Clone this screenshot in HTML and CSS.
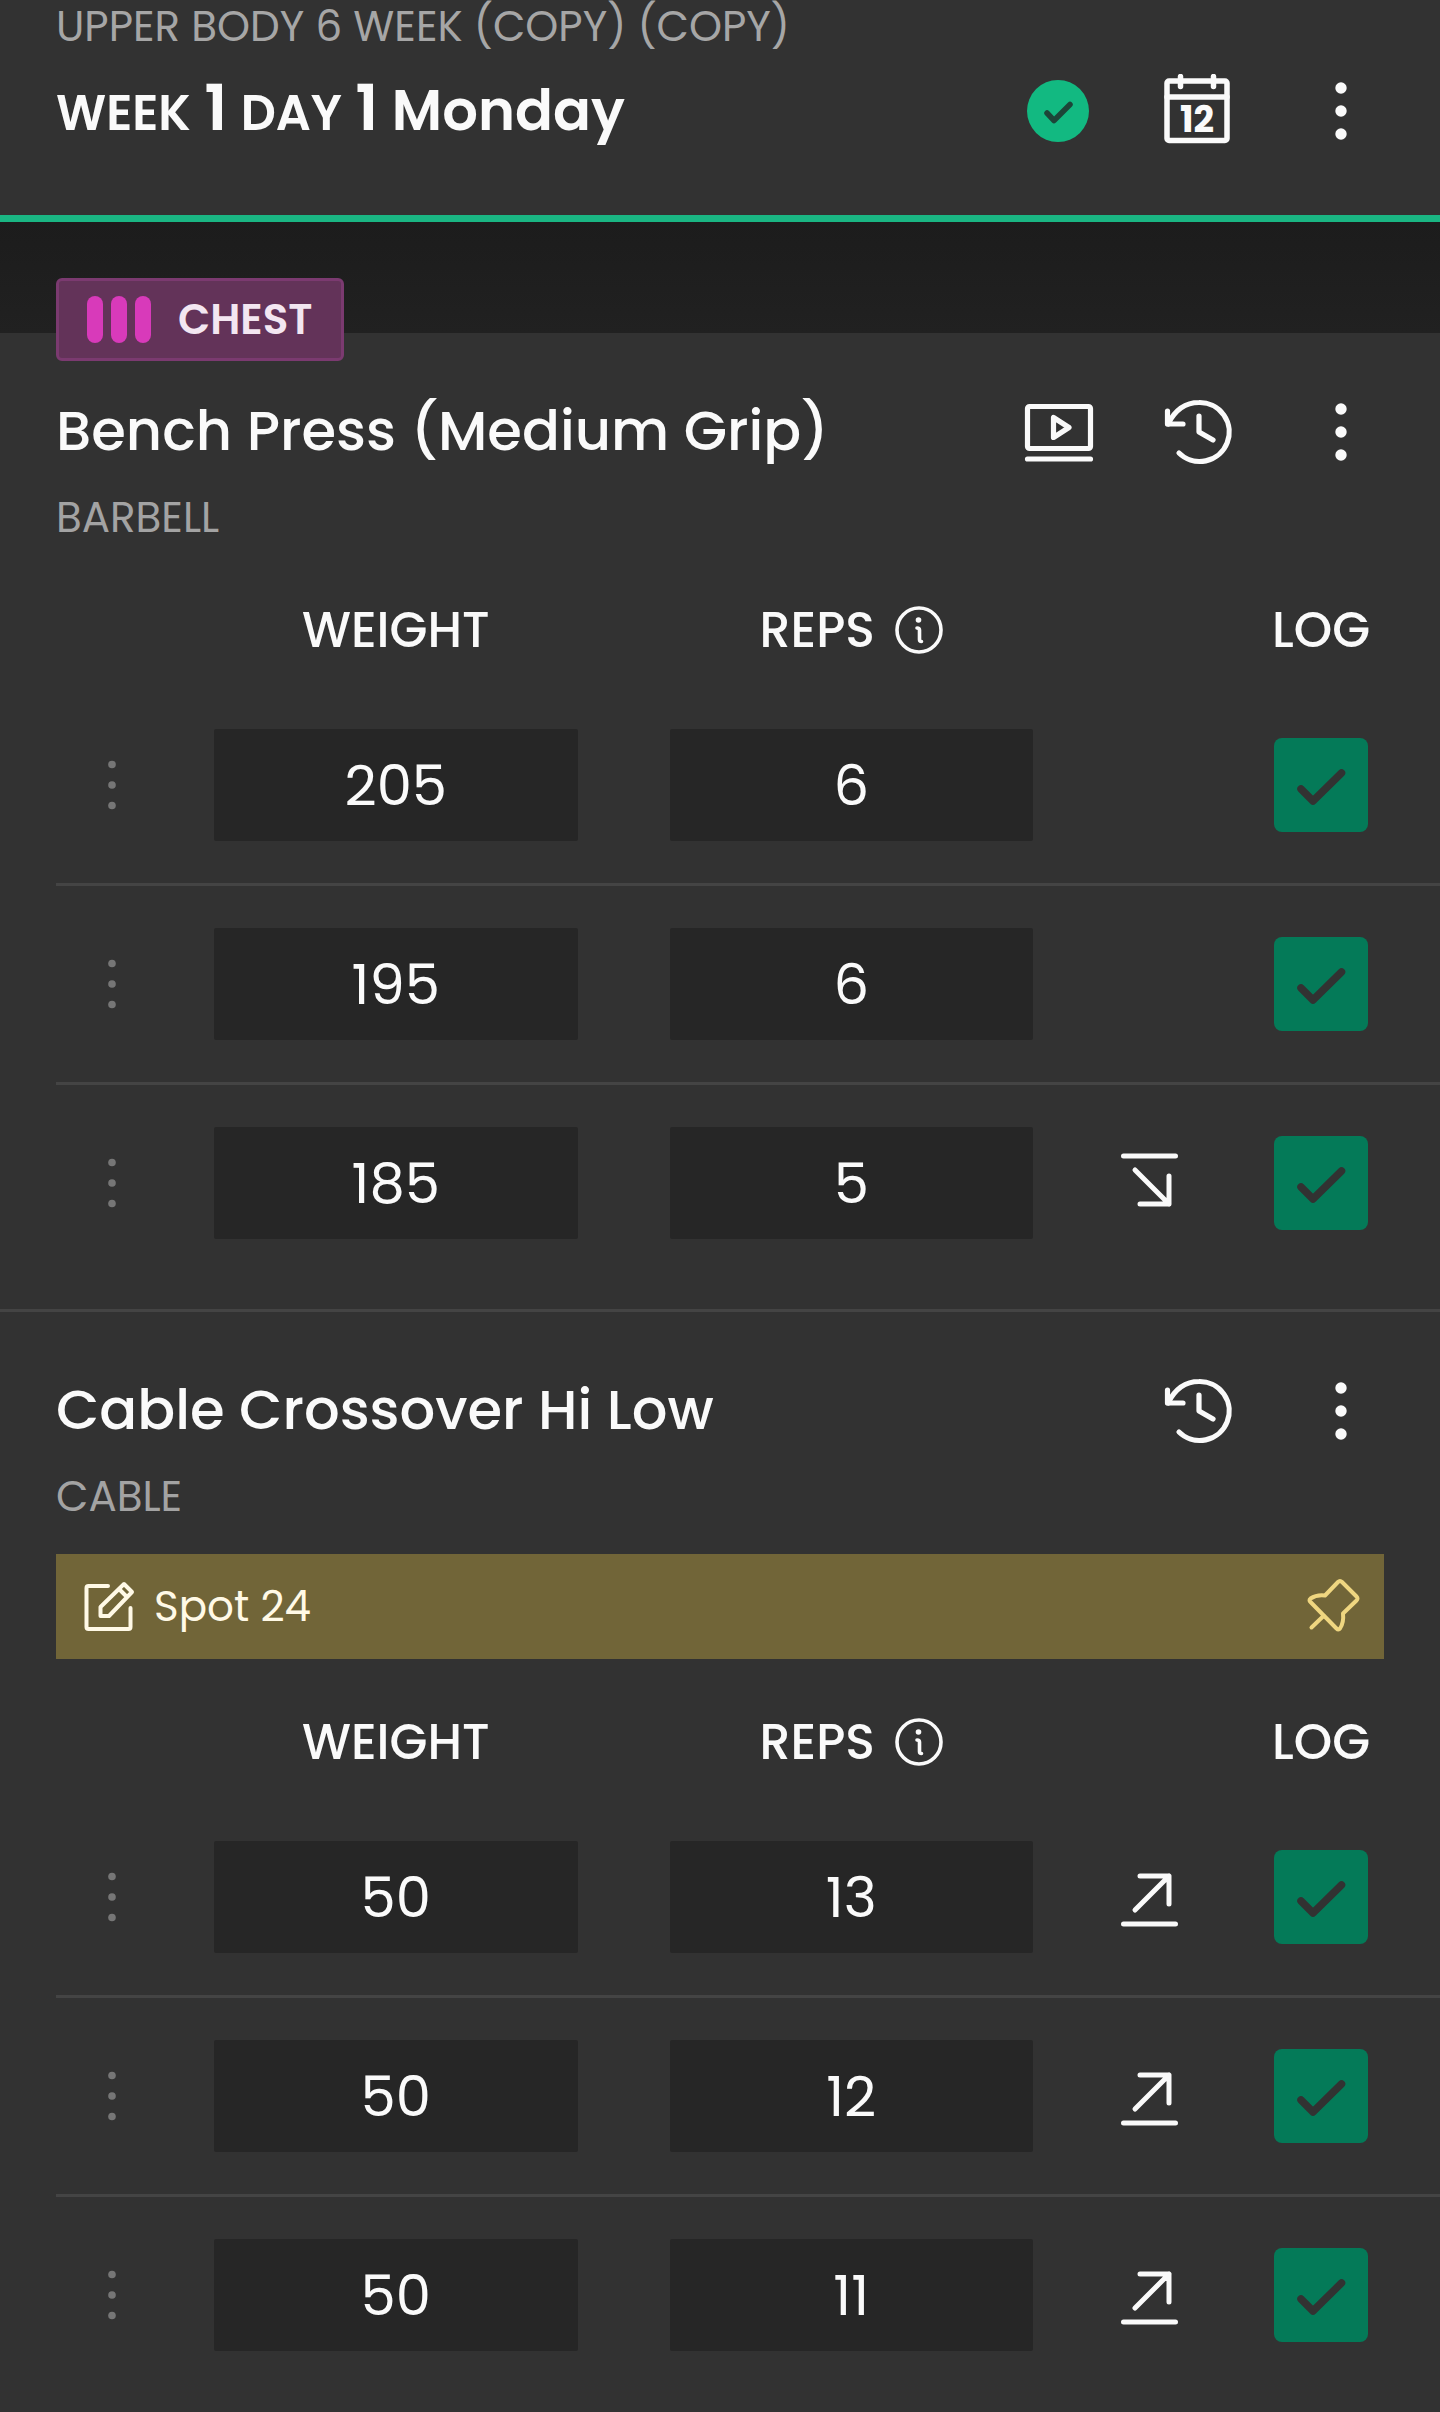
FILE: index.html
```html
<!DOCTYPE html>
<html lang="en">
<head>
    <meta charset="UTF-8">
    <meta name="viewport" content="width=device-width, initial-scale=1">
    <title>Week 1 Day 1 Monday</title>
    <link rel="stylesheet" href="styles.css">
</head>
<body>
    <!-- Icon set -->
    <svg class="icon-defs" aria-hidden="true">
        <symbol id="icon-done" viewBox="0 0 72 72">
            <circle cx="36" cy="37" r="31" fill="#12b981"/>
            <path d="M25 39l7 7.500 16-16" fill="none" stroke="#1d4538" stroke-width="5.500" stroke-linecap="round" stroke-linejoin="round"/>
        </symbol>
        <symbol id="icon-more" viewBox="0 0 72 72">
            <g fill="currentColor"><circle cx="37" cy="14" r="5.700"/><circle cx="37" cy="37" r="5.700"/><circle cx="37" cy="60" r="5.700"/></g>
        </symbol>
        <symbol id="icon-video" viewBox="0 0 72 72">
            <g fill="none" stroke="currentColor" stroke-width="5.200" stroke-linecap="round" stroke-linejoin="round">
                <rect x="5.500" y="11.500" width="63" height="42" rx="2"/>
                <path d="M5.500 64h63M31.500 22.500v20l15.500-10z"/>
            </g>
        </symbol>
        <symbol id="icon-history" viewBox="0 0 72 72">
            <g fill="none" stroke="currentColor" stroke-width="5.200" stroke-linecap="round" stroke-linejoin="round">
                <path d="M5 29C12 15 22 7.500 36 7.500A29.500 29.500 0 1 1 16 58"/>
                <path d="M4.500 16v13H20M36 21v16l14 8"/>
            </g>
        </symbol>
        <symbol id="icon-info" viewBox="0 0 48 48">
            <circle cx="24" cy="24" r="22" fill="none" stroke="currentColor" stroke-width="3.600"/>
            <circle cx="23.500" cy="14" r="2.800" fill="currentColor"/>
            <path d="M22 22q2.500 0 2.500 2v9.500q0 2 2 2" fill="none" stroke="currentColor" stroke-width="3.600" stroke-linecap="round"/>
        </symbol>
        <symbol id="icon-grip" viewBox="0 0 72 72">
            <g fill="currentColor"><circle cx="36" cy="15.500" r="3.800"/><circle cx="36" cy="36" r="3.800"/><circle cx="36" cy="56.500" r="3.800"/></g>
        </symbol>
        <symbol id="icon-down" viewBox="0 0 72 72">
            <path d="M10.500 9h52M22 23l34 34M56 29v28H27" fill="none" stroke="currentColor" stroke-width="5" stroke-linecap="round" stroke-linejoin="round"/>
        </symbol>
        <symbol id="icon-up" viewBox="0 0 72 72">
            <path d="M10.500 63h52M22 49l34-34M27 15h29v28" fill="none" stroke="currentColor" stroke-width="5" stroke-linecap="round" stroke-linejoin="round"/>
        </symbol>
    </svg>

    <header class="top-bar">
        <p class="plan-name">UPPER BODY 6 WEEK (COPY) (COPY)</p>
        <div class="title-row">
            <h1 class="day-title"><span class="label">WEEK</span> <span class="num">1</span> <span class="label">DAY</span> <span class="num">1</span> Monday</h1>
            <div class="actions">
                <button type="button" class="icon-btn" aria-label="Workout complete"><svg><use href="#icon-done"/></svg></button>
                <button type="button" class="icon-btn" aria-label="Calendar">
                    <svg viewBox="0 0 72 72">
                        <g fill="none" stroke="currentColor" stroke-width="5.500" stroke-linecap="round" stroke-linejoin="round">
                            <rect x="4" y="7" width="60" height="59.500" rx="2"/>
                            <path d="M4 23h60M17.500 2.500v10M50.500 2.500v10"/>
                        </g>
                        <text class="cal-day" x="34" y="58" text-anchor="middle" fill="currentColor">12</text>
                    </svg>
                </button>
                <button type="button" class="icon-btn" aria-label="More options"><svg><use href="#icon-more"/></svg></button>
            </div>
        </div>
    </header>

    <main>
        <div class="band"></div>

        <section class="exercise">
            <div class="muscle-badge">
                <span class="bars"><i></i><i></i><i></i></span>
                CHEST
            </div>
            <div class="title-row">
                <h2 class="exercise-name">Bench Press (Medium Grip)</h2>
                <div class="actions">
                    <button type="button" class="icon-btn" aria-label="Video"><svg><use href="#icon-video"/></svg></button>
                    <button type="button" class="icon-btn" aria-label="History"><svg><use href="#icon-history"/></svg></button>
                    <button type="button" class="icon-btn" aria-label="More options"><svg><use href="#icon-more"/></svg></button>
                </div>
            </div>
            <p class="equipment">BARBELL</p>

            <table class="sets">
                <thead>
                    <tr>
                        <th class="col-menu"></th>
                        <th>WEIGHT</th>
                        <th><span class="reps-head">REPS <button type="button" class="info-btn" aria-label="About reps"><svg><use href="#icon-info"/></svg></button></span></th>
                        <th class="col-trend"></th>
                        <th class="col-log">LOG</th>
                    </tr>
                </thead>
                <tbody>
                    <tr>
                        <td><button type="button" class="grip" aria-label="Set 1 options"><svg><use href="#icon-grip"/></svg></button></td>
                        <td class="cell"><input type="text" class="value" aria-label="Weight" value="205"></td>
                        <td class="cell"><input type="text" class="value" aria-label="Reps" value="6"></td>
                        <td></td>
                        <td class="col-log"><input type="checkbox" class="log" aria-label="Log set 1" checked></td>
                    </tr>
                    <tr>
                        <td><button type="button" class="grip" aria-label="Set 2 options"><svg><use href="#icon-grip"/></svg></button></td>
                        <td class="cell"><input type="text" class="value" aria-label="Weight" value="195"></td>
                        <td class="cell"><input type="text" class="value" aria-label="Reps" value="6"></td>
                        <td></td>
                        <td class="col-log"><input type="checkbox" class="log" aria-label="Log set 2" checked></td>
                    </tr>
                    <tr>
                        <td><button type="button" class="grip" aria-label="Set 3 options"><svg><use href="#icon-grip"/></svg></button></td>
                        <td class="cell"><input type="text" class="value" aria-label="Weight" value="185"></td>
                        <td class="cell"><input type="text" class="value" aria-label="Reps" value="5"></td>
                        <td><svg class="trend"><use href="#icon-down"/></svg></td>
                        <td class="col-log"><input type="checkbox" class="log" aria-label="Log set 3" checked></td>
                    </tr>
                </tbody>
            </table>
        </section>

        <section class="exercise next">
            <div class="title-row">
                <h2 class="exercise-name">Cable Crossover Hi Low</h2>
                <div class="actions">
                    <button type="button" class="icon-btn" aria-label="History"><svg><use href="#icon-history"/></svg></button>
                    <button type="button" class="icon-btn" aria-label="More options"><svg><use href="#icon-more"/></svg></button>
                </div>
            </div>
            <p class="equipment">CABLE</p>
            <div class="note">
                <svg class="note-edit" viewBox="0 0 52 52" aria-hidden="true">
                    <g fill="none" stroke="currentColor" stroke-width="4" stroke-linecap="round" stroke-linejoin="round">
                        <path d="M25 5H5.500q-2 0-2 2v39q0 2 2 2h40q2 0 2-2V27"/>
                        <path d="M17.500 35v-9L41 3l8 8-23 24zM36 8l8 8"/>
                    </g>
                </svg>
                <span class="note-text">Spot 24</span>
                <svg class="note-pin" viewBox="0 0 64 62" aria-hidden="true">
                    <path d="M25 19.500L38 6q2-2 4 0l14.500 14.500q2 2 0 4L43 37.500q1 9-3 15-1.500 2-3.500 0L10.500 26q-2-2 0-3.500 6-4 14.500-3zM24 39.500L11.500 51.500" fill="none" stroke="currentColor" stroke-width="4" stroke-linecap="round" stroke-linejoin="round"/>
                </svg>
            </div>

            <table class="sets">
                <thead>
                    <tr>
                        <th class="col-menu"></th>
                        <th>WEIGHT</th>
                        <th><span class="reps-head">REPS <button type="button" class="info-btn" aria-label="About reps"><svg><use href="#icon-info"/></svg></button></span></th>
                        <th class="col-trend"></th>
                        <th class="col-log">LOG</th>
                    </tr>
                </thead>
                <tbody>
                    <tr>
                        <td><button type="button" class="grip" aria-label="Set 1 options"><svg><use href="#icon-grip"/></svg></button></td>
                        <td class="cell"><input type="text" class="value" aria-label="Weight" value="50"></td>
                        <td class="cell"><input type="text" class="value" aria-label="Reps" value="13"></td>
                        <td><svg class="trend"><use href="#icon-up"/></svg></td>
                        <td class="col-log"><input type="checkbox" class="log" aria-label="Log set 1" checked></td>
                    </tr>
                    <tr>
                        <td><button type="button" class="grip" aria-label="Set 2 options"><svg><use href="#icon-grip"/></svg></button></td>
                        <td class="cell"><input type="text" class="value" aria-label="Weight" value="50"></td>
                        <td class="cell"><input type="text" class="value" aria-label="Reps" value="12"></td>
                        <td><svg class="trend"><use href="#icon-up"/></svg></td>
                        <td class="col-log"><input type="checkbox" class="log" aria-label="Log set 2" checked></td>
                    </tr>
                    <tr>
                        <td><button type="button" class="grip" aria-label="Set 3 options"><svg><use href="#icon-grip"/></svg></button></td>
                        <td class="cell"><input type="text" class="value" aria-label="Weight" value="50"></td>
                        <td class="cell"><input type="text" class="value" aria-label="Reps" value="11"></td>
                        <td><svg class="trend"><use href="#icon-up"/></svg></td>
                        <td class="col-log"><input type="checkbox" class="log" aria-label="Log set 3" checked></td>
                    </tr>
                </tbody>
            </table>
        </section>
    </main>
</body>
</html>
```

FILE: styles.css
```css
* {
    box-sizing: border-box;
}

body {
    margin: 0;
    font-family: Poppins, Inter, sans-serif;
    background-color: #323232;
    color: #fafafa;
}

h1, h2, p {
    margin: 0;
}

button {
    padding: 0;
    border: none;
    background: none;
    color: inherit;
    font-family: inherit;
    cursor: pointer;
}

svg {
    display: block;
}

.icon-defs {
    display: none;
}

/* Header */
.top-bar {
    padding: 2px 0 65px;
    border-bottom: 7px solid #1ab683;
}

.plan-name {
    padding: 0 56px;
    margin-bottom: 18px;
    font-size: 42px;
    line-height: 50px;
    color: #a6a6a6;
}

.title-row {
    display: flex;
    align-items: center;
    justify-content: space-between;
    height: 80px;
    padding: 0 64px 0 56px;
}

.day-title {
    font-size: 56px;
    font-weight: 600;
    line-height: 80px;
    white-space: nowrap;
}

.day-title .label {
    font-size: 49px;
}

.day-title .num {
    font-size: 64px;
}

.actions {
    display: flex;
    gap: 69px;
}

.icon-btn svg {
    width: 72px;
    height: 72px;
}

.cal-day {
    font-size: 36px;
    font-weight: 700;
}

/* Dark strip under the header */
.band {
    height: 111px;
    background: linear-gradient(#1c1c1c, #212121);
}

/* Exercise block */
.exercise {
    padding-bottom: 28px;
}

.exercise.next {
    padding-top: 58px;
    padding-bottom: 20px;
    border-top: 3px solid #444444;
}

.muscle-badge {
    position: relative;
    display: flex;
    align-items: center;
    gap: 27px;
    width: fit-content;
    height: 83px;
    margin: -55px 0 30px 56px;
    padding: 0 28px;
    border: 3px solid #7b3a70;
    border-radius: 6px;
    background-color: #633359;
    color: #f3e6f1;
    font-size: 42px;
    font-weight: 600;
}

.bars {
    display: flex;
    gap: 8px;
}

.bars i {
    width: 16px;
    height: 47px;
    border-radius: 8px;
    background-color: #d83aba;
}

.exercise-name {
    font-size: 56px;
    font-weight: 500;
    line-height: 78px;
    white-space: nowrap;
}

.equipment {
    margin: 22px 56px 4px;
    font-size: 42px;
    line-height: 50px;
    color: #a3a3a3;
}

.note {
    display: flex;
    align-items: center;
    height: 105px;
    margin: 32px 56px 0;
    padding: 0 20px 0 27px;
    background-color: #716538;
    color: #fff9e6;
    font-size: 42px;
}

.note-edit {
    width: 52px;
    height: 52px;
    margin-right: 19px;
}

.note-text {
    flex: 1;
}

.note-pin {
    width: 64px;
    height: 62px;
    color: #efd680;
}

/* Sets table */
.sets {
    width: calc(100% - 56px);
    margin-left: 56px;
    border-spacing: 0;
    table-layout: fixed;
}

.sets th {
    height: 140px;
    padding: 26px 0 0;
    font-size: 49px;
    font-weight: 500;
}

.sets td {
    height: 196px;
    padding: 0;
}

.sets tbody tr + tr td {
    height: 199px;
    border-top: 3px solid #444444;
}

.sets .col-menu {
    width: 112px;
}

.sets .col-trend {
    width: 140px;
}

.sets .col-log {
    width: 221px;
    padding-right: 17px;
    text-align: center;
}

.sets .cell {
    padding: 0 46px;
}

.reps-head {
    display: flex;
    align-items: center;
    justify-content: center;
    gap: 20px;
}

.info-btn svg {
    width: 48px;
    height: 48px;
}

.grip {
    display: block;
    margin: 0 auto;
    color: #767676;
}

.grip svg,
.trend {
    width: 72px;
    height: 72px;
    margin: 0 auto;
}

.value {
    display: block;
    width: 100%;
    height: 112px;
    padding: 0;
    border: none;
    border-radius: 2px;
    background-color: #262626;
    color: #fafafa;
    font-family: inherit;
    font-size: 56px;
    text-align: center;
}

.log {
    appearance: none;
    display: block;
    width: 94px;
    height: 94px;
    margin: 0 auto;
    border-radius: 8px;
    background-color: #525252;
    cursor: pointer;
}

.log:checked {
    background: #047a58 url("data:image/svg+xml,%3Csvg xmlns='http://www.w3.org/2000/svg' viewBox='0 0 94 94'%3E%3Cpath d='M27 51l12 12 28.500-28' fill='none' stroke='%23323232' stroke-width='7.500' stroke-linecap='round' stroke-linejoin='round'/%3E%3C/svg%3E") center / contain no-repeat;
}
```
